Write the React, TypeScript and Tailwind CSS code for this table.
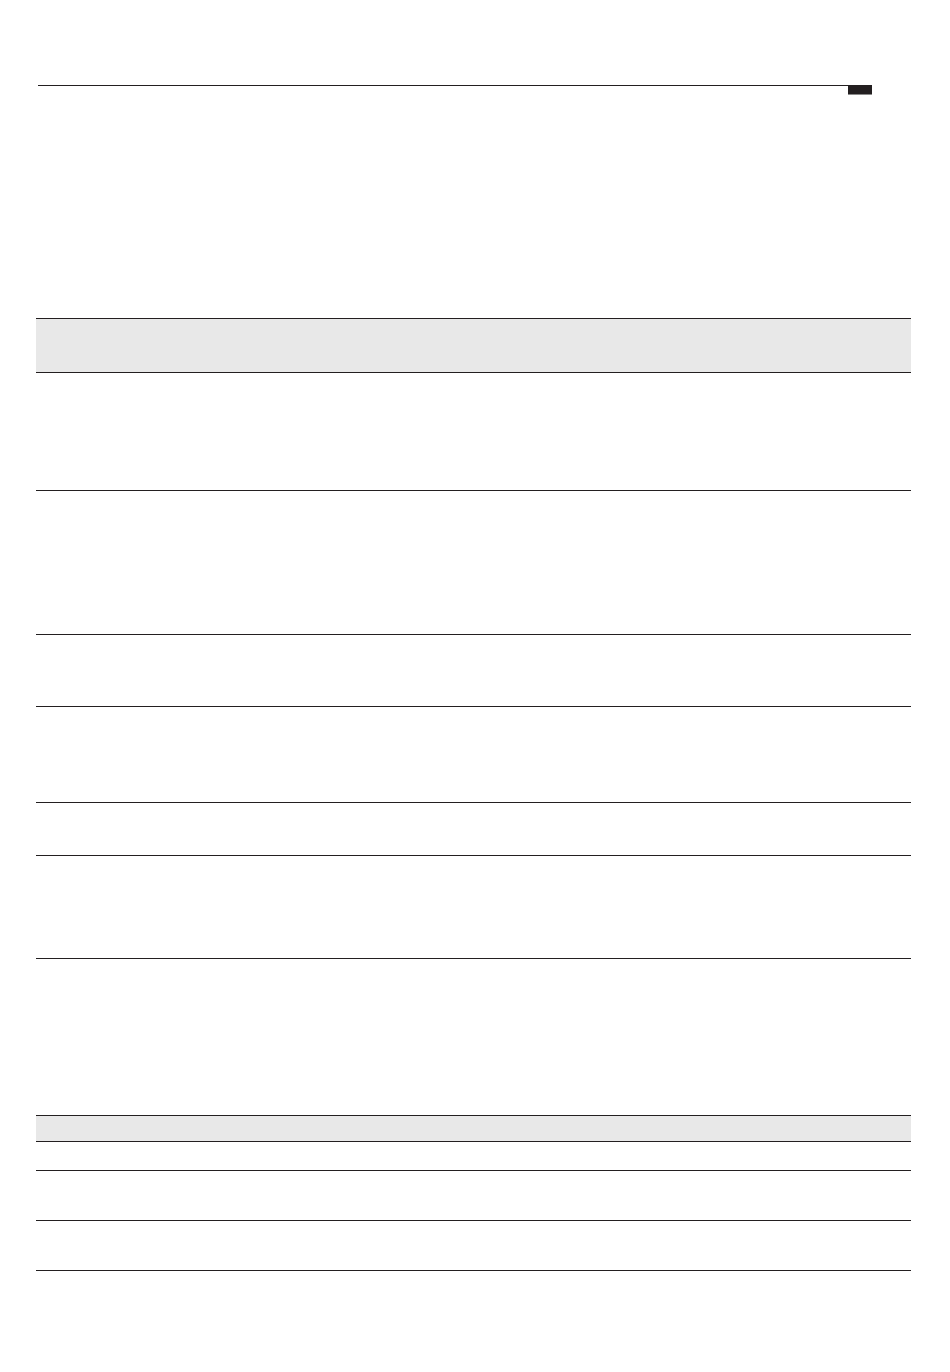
// Blank ruled form page: running header rule with tab, two empty ruled tables.

const ruleColor = 'border-[#231f20]';

interface RuledTableProps {
  headerHeight: string;
  rows: string[];
}

function RuledTable({ headerHeight, rows }: RuledTableProps) {
  return (
    <div className={`mx-[39px] ml-[36px] border-t ${ruleColor}`}>
      {/* Shaded header row */}
      <div className={`${headerHeight} bg-[#e8e8e8] border-b ${ruleColor}`} />
      {/* Body rows */}
      {rows.map((h, i) => (
        <div key={i} className={`${h} border-b ${ruleColor}`} />
      ))}
    </div>
  );
}

export default function App() {
  return (
    <div className="min-h-[1372px] w-[950px] bg-white font-['Liberation_Sans',Arial,sans-serif] text-[#231f20]">
      {/* Running header */}
      <div className="flex items-start pt-[85px] pl-[38px] pr-[78px]">
        <div className={`flex-1 border-t ${ruleColor}`} />
        <div className="h-[10px] w-[24px] bg-[#231f20] border-b border-[#8a8a8a]" />
      </div>

      <div className="mt-[223px]">
        <RuledTable
          headerHeight="h-[54px]"
          rows={['h-[118px]', 'h-[144px]', 'h-[72px]', 'h-[96px]', 'h-[53px]', 'h-[103px]']}
        />
      </div>

      <div className="mt-[156px]">
        <RuledTable
          headerHeight="h-[26px]"
          rows={['h-[29px]', 'h-[50px]', 'h-[50px]']}
        />
      </div>
    </div>
  );
}
